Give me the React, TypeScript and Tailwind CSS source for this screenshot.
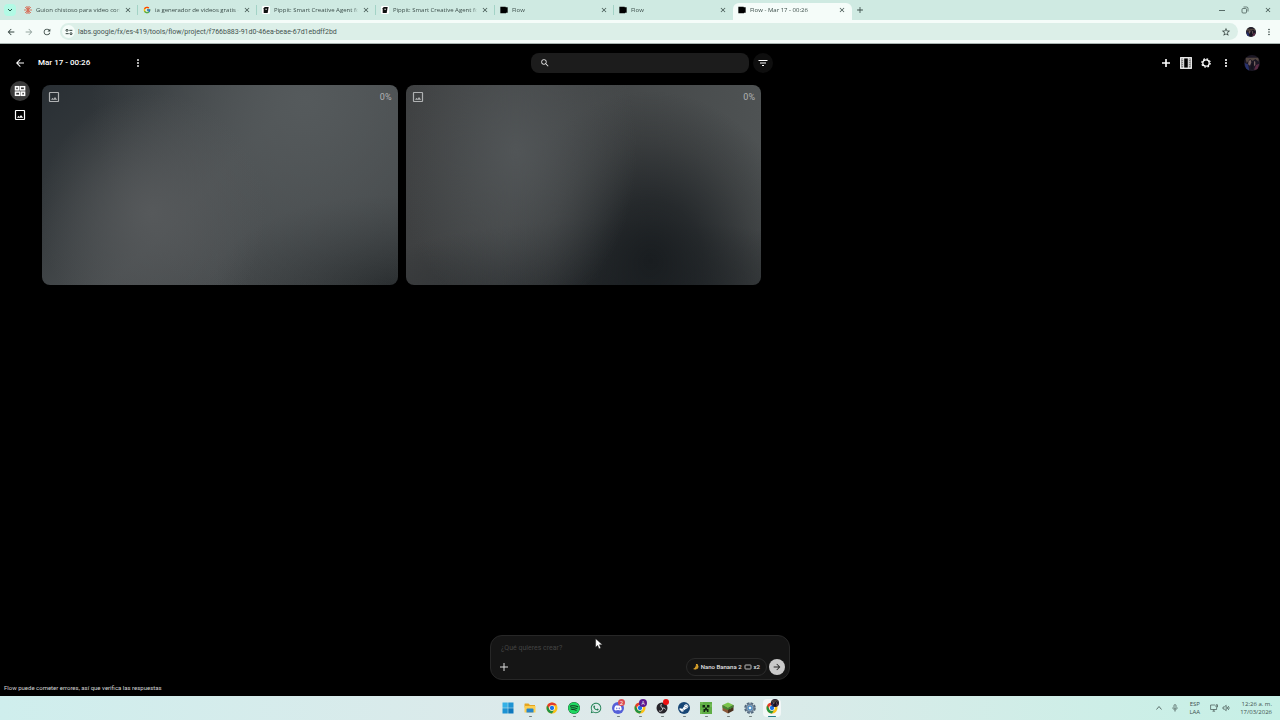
import type { ReactNode } from "react";
import clsx from "clsx";
import { FaDiscord, FaSpotify, FaSteamSymbol, FaWhatsapp } from "react-icons/fa";
import { FcGoogle } from "react-icons/fc";
import {
  MdAdd,
  MdArrowBack,
  MdArrowForward,
  MdClose,
  MdFilterList,
  MdMoreVert,
  MdRefresh,
  MdSearch,
  MdStarBorder
} from "react-icons/md";

interface IconProps {
  className?: string;
}

const ChromeIcon = ({ className }: IconProps) => (
  <svg viewBox="0 0 24 24" className={className}>
    <circle cx="12" cy="12" r="11" fill="#fbc116" />
    <path
      d="M2.5 6.5 7.2 14.8A5.6 5.6 0 0 0 16.8 14.8L12 23A11 11 0 0 1 2.5 6.5Z"
      fill="#229342"
    />
    <path d="M2.5 6.5A11 11 0 0 1 21.5 6.5H12A5.6 5.6 0 0 0 7.2 14.8Z" fill="#e33b2e" />
    <circle cx="12" cy="12" r="5.6" fill="#fff" />
    <circle cx="12" cy="12" r="4.3" fill="#1a73e8" />
  </svg>
);

const WindowsIcon = ({ className }: IconProps) => (
  <svg viewBox="0 0 24 24" className={className}>
    <path d="M1 1h10.5v10.5H1Z" fill="#35b1e6" />
    <path d="M12.5 1H23v10.5H12.5ZM1 12.5h10.5V23H1Z" fill="#1c93d3" />
    <path d="M12.5 12.5H23V23H12.5Z" fill="#0c78bd" />
  </svg>
);

const ImageIcon = ({ className }: IconProps) => (
  <svg viewBox="0 0 24 24" fill="none" className={className}>
    <rect x="3" y="3" width="18" height="18" rx="1" stroke="currentColor" strokeWidth="2.4" />
    <path d="m6 17.5 3-4 2 2.6 3-4 4.4 5.4Z" fill="currentColor" />
  </svg>
);

const GridIcon = ({ className }: IconProps) => (
  <svg
    viewBox="0 0 24 24"
    fill="none"
    stroke="currentColor"
    strokeWidth="3"
    className={className}
  >
    <rect x="3" y="3.4" width="6" height="6.4" />
    <rect x="12.6" y="3.4" width="8.6" height="6.4" />
    <rect x="3" y="14.2" width="8.6" height="6.4" />
    <rect x="15.2" y="14.2" width="6" height="6.4" />
  </svg>
);

const FilmIcon = ({ className }: IconProps) => (
  <svg viewBox="0 0 24 24" fill="none" stroke="currentColor" className={className}>
    <rect x="1.5" y="1.5" width="21" height="21" strokeWidth="2.6" />
    <path d="M7.4 2v20M16.6 2v20" strokeWidth="2" />
    <path d="M4.6 3v18M19.4 3v18" strokeWidth="3.4" strokeDasharray="2.4 1.6" />
  </svg>
);

const GearIcon = ({ className }: IconProps) => (
  <svg viewBox="0 0 24 24" fill="none" stroke="currentColor" className={className}>
    <circle cx="12" cy="12" r="6.4" strokeWidth="2.6" />
    <circle cx="12" cy="12" r="8.4" strokeWidth="2.4" strokeDasharray="3.4 3.2" />
  </svg>
);

const PlusIcon = ({ className }: IconProps) => (
  <svg viewBox="0 0 12 12" stroke="currentColor" strokeWidth="1.6" className={className}>
    <path d="M6 2v8M2 6h8" />
  </svg>
);

const TuneIcon = ({ className }: IconProps) => (
  <svg
    viewBox="0 0 24 24"
    fill="none"
    stroke="currentColor"
    strokeWidth="3"
    className={className}
  >
    <circle cx="6" cy="7" r="3" />
    <path d="M13 7h9M2 17h9" />
    <circle cx="18" cy="17" r="3" />
  </svg>
);

const ClaudeIcon = ({ className }: IconProps) => (
  <svg
    viewBox="0 0 24 24"
    stroke="#d6705a"
    strokeWidth="2.8"
    strokeLinecap="round"
    className={className}
  >
    <path d="M12 1v22M1 12h22M4 4l16 16M20 4 4 20M8 2l8 20M16 2 8 22" />
  </svg>
);

const PippitIcon = ({ className }: IconProps) => (
  <svg viewBox="0 0 24 24" className={className}>
    <rect width="24" height="24" rx="4" fill="#fff" />
    <path d="M8 3h12l-3 18H5V7Z" fill="#111" />
    <path d="M10 8h5v3h-5Z" fill="#ddd" />
  </svg>
);

const FlowIcon = ({ className }: IconProps) => (
  <svg viewBox="0 0 24 24" className={className}>
    <path d="M1 2h16v2h6v16h-5v2H1Z" fill="#000" />
  </svg>
);

const Avatar = ({ className }: IconProps) => (
  <svg viewBox="0 0 24 24" className={clsx("rounded-full", className)}>
    <rect width="24" height="24" fill="#1b1724" />
    <path d="M2 4h20v6l-5-4-4 3-4-3-5 6Z" fill="#51443f" />
    <path d="m7 9 3-2 1 4-2 5-3-2ZM15 9l2 1v5l-2 2Z" fill="#74605f" />
    <path d="M1 12l5 2 2 10H3Z" fill="#27316b" />
    <path d="m12 12 2 2-1 8-3-2Z" fill="#15121d" />
    <path d="m18 15 5-2-3 9h-5Z" fill="#5b2c46" />
  </svg>
);

const FolderIcon = ({ className }: IconProps) => (
  <svg viewBox="0 0 24 24" className={className}>
    <path d="M1 4a1 1 0 0 1 1-1h7l3 3h10v5H1Z" fill="#e5a520" />
    <path d="M1 8h22v13H1Z" fill="#fccf50" />
    <path d="M5 15a2 2 0 0 1 2-2h10a2 2 0 0 1 2 2v6H5Z" fill="#2685c9" />
  </svg>
);

const ObsIcon = ({ className }: IconProps) => (
  <svg viewBox="0 0 24 24" className={className}>
    <circle cx="12" cy="12" r="11" fill="#26242a" />
    <g fill="none" stroke="#d5d5d7" strokeWidth="1.8">
      <path d="M11 4a5 5 0 0 0 2 8M19 15a5 5 0 0 0-6-3M6 18a5 5 0 0 0 7-6" />
    </g>
  </svg>
);

const CreeperIcon = ({ className }: IconProps) => (
  <svg viewBox="0 0 24 24" className={className}>
    <rect width="24" height="24" fill="#5fae45" />
    <path d="M0 0h6v4H0ZM18 4h6v6h-6ZM0 16h4v8H0Z" fill="#6fb955" />
    <path d="M5 6h5v5H5ZM14 6h5v5h-5ZM10 11h4v3h3v6h-3v-3h-4v3H7v-6h3Z" fill="#132612" />
  </svg>
);

const GrassBlockIcon = ({ className }: IconProps) => (
  <svg viewBox="0 0 24 24" className={className}>
    <path d="m12 1 11 5-11 6L1 6Z" fill="#79c54b" />
    <path d="m1 6 11 6v11L1 17Z" fill="#8a5939" />
    <path d="m23 6-11 6v11l11-6Z" fill="#49301f" />
    <path d="m1 6 11 6v4l-3-2v2l-4-4v2L1 11ZM23 6l-11 6v4l4-3v2l4-4v1l3-2Z" fill="#438831" />
  </svg>
);

const SettingsIcon = ({ className }: IconProps) => (
  <svg viewBox="0 0 24 24" fill="none" className={className}>
    <circle cx="12" cy="12" r="9.6" stroke="#52677a" strokeWidth="4" strokeDasharray="5.2 2.34" />
    <circle cx="12" cy="12" r="7.4" fill="#9bb3c6" stroke="#6b8196" strokeWidth="3" />
    <circle cx="12" cy="12" r="4" fill="#edf6fb" stroke="#2679bd" strokeWidth="2" />
  </svg>
);

interface Tab {
  title: string;
  icon: ReactNode;
  active?: boolean;
}

const tabs: Tab[] = [
  { title: "Guion chistoso para video cort", icon: <ClaudeIcon className="size-2" /> },
  { title: "ia generador de videos gratis -", icon: <FcGoogle className="size-2" /> },
  { title: "Pippit: Smart Creative Agent fo", icon: <PippitIcon className="size-2" /> },
  { title: "Pippit: Smart Creative Agent fo", icon: <PippitIcon className="size-2" /> },
  { title: "Flow", icon: <FlowIcon className="size-2" /> },
  { title: "Flow", icon: <FlowIcon className="size-2" /> },
  { title: "Flow - Mar 17 - 00:26", icon: <FlowIcon className="size-2" />, active: true }
];

const TabStrip = () => (
  <div className="flex h-5 items-center bg-[#cfeae2] text-[#3b4d49]">
    <button
      aria-label="Buscar pestañas"
      className="ml-1 flex size-3 shrink-0 items-center justify-center rounded-sm bg-[#b2fae5]"
    >
      <svg viewBox="0 0 8 8" className="size-2" fill="none" stroke="#24564a">
        <path d="m2 3 2 2 2-2" />
      </svg>
    </button>
    <div className="flex min-w-0 self-end pl-[3px]">
      {tabs.map((tab, index) => (
        <div
          key={index}
          className={clsx(
            "flex h-[17px] w-[119px] min-w-0 items-center",
            tab.active && "rounded-t-md bg-[#f5fcf9]"
          )}
        >
          <div
            className={clsx(
              "mb-[3px] flex h-2.5 min-w-0 flex-1 items-center gap-1 border-r pr-[5px] pl-[5px]",
              // no divider beside the active tab
              tab.active || tabs[index + 1]?.active
                ? "border-transparent"
                : "border-[#a3d3c6]"
            )}
          >
            {tab.icon}
            <span className="min-w-0 flex-1 mask-r-from-95% text-[6px] leading-2 whitespace-nowrap">
              {tab.title}
            </span>
            <button aria-label="Cerrar pestaña">
              <MdClose className="size-2" />
            </button>
          </div>
        </div>
      ))}
    </div>
    <button aria-label="Nueva pestaña" className="ml-[3px]">
      <MdAdd className="size-2.5" />
    </button>
    <div className="mr-2 ml-auto flex items-center gap-[15px]">
      <button aria-label="Minimizar">
        <svg viewBox="0 0 8 8" className="size-2" stroke="#3b4d49" strokeWidth="0.8">
          <path d="M1 4.5h6" />
        </svg>
      </button>
      <button aria-label="Restaurar">
        <svg viewBox="0 0 8 8" className="size-2" fill="none" stroke="#3b4d49" strokeWidth="0.7">
          <rect x="1" y="2.5" width="4.5" height="4.5" rx="1" />
          <path d="M2.5 1h3A1.5 1.5 0 0 1 7 2.5v3" />
        </svg>
      </button>
      <button aria-label="Cerrar">
        <MdClose className="size-2" />
      </button>
    </div>
  </div>
);

const AddressBar = () => (
  <div className="flex h-6 items-center border-b border-[#a9b5b1] bg-[#f5fcf9] text-[#33423e]">
    <div className="flex w-[60px] items-center gap-2 pl-1.5">
      <button aria-label="Atrás">
        <MdArrowBack className="size-2.5" />
      </button>
      <button aria-label="Adelante" className="text-[#96a5a0]">
        <MdArrowForward className="size-2.5" />
      </button>
      <button aria-label="Recargar">
        <MdRefresh className="size-2.5" />
      </button>
    </div>
    <div className="flex h-[17px] flex-1 items-center gap-[3px] rounded-full bg-[#dcefe8] pr-[7px] pl-0.5">
      <button
        aria-label="Información del sitio"
        className="flex size-[13px] items-center justify-center rounded-full bg-[#f5fcf9]"
      >
        <TuneIcon className="size-2" />
      </button>
      <input
        aria-label="Dirección"
        className="min-w-0 flex-1 bg-transparent font-[Roboto,sans-serif] text-[7px] leading-3 text-[#44534f] outline-none"
        defaultValue="labs.google/fx/es-419/tools/flow/project/f766b883-91d0-46ea-beae-67d1ebdff2bd"
      />
      <button aria-label="Agregar a favoritos">
        <MdStarBorder className="size-2.5" />
      </button>
    </div>
    <div className="flex items-center gap-2 pr-1.5 pl-2">
      <button aria-label="Perfil">
        <Avatar className="size-2.5" />
      </button>
      <button aria-label="Menú de Chrome">
        <MdMoreVert className="size-2.5" />
      </button>
    </div>
  </div>
);

const Header = () => (
  <header className="grid h-9 grid-cols-[1fr_218px_1fr] items-center">
    <div className="flex items-center pl-3.5">
      <button aria-label="Volver">
        <MdArrowBack className="size-3" />
      </button>
      <h1 className="w-[94px] pl-3 text-[8px] leading-3 font-medium whitespace-nowrap">
        Mar 17 - 00:26
      </h1>
      <button aria-label="Opciones del proyecto" className="ml-3 text-neutral-300">
        <MdMoreVert className="size-3" />
      </button>
    </div>
    <label className="flex h-5 items-center gap-2 rounded-lg bg-[#1c1c1c] px-[9px]">
      <MdSearch className="size-2.5 text-neutral-200" />
      <input aria-label="Buscar" className="min-w-0 flex-1 bg-transparent text-[8px] outline-none" />
    </label>
    <div className="flex items-center pr-5">
      <button
        aria-label="Filtrar"
        className="ml-1 flex size-5 items-center justify-center rounded-full bg-[#0e0e0e]"
      >
        <MdFilterList className="size-3" />
      </button>
      <div className="ml-auto flex items-center gap-2">
        <button aria-label="Agregar">
          <PlusIcon className="size-3" />
        </button>
        <button aria-label="Escenas">
          <FilmIcon className="size-3" />
        </button>
        <button aria-label="Configuración">
          <GearIcon className="size-3" />
        </button>
        <button aria-label="Más">
          <MdMoreVert className="size-3" />
        </button>
        <button aria-label="Cuenta" className="ml-1">
          <Avatar className="size-4" />
        </button>
      </div>
    </div>
  </header>
);

const cards = [
  "bg-[radial-gradient(ellipse_32%_60%_at_31%_64%,#56595b_0%,transparent_100%),radial-gradient(ellipse_60%_110%_at_74%_8%,#555a5c_0%,transparent_100%),radial-gradient(ellipse_50%_45%_at_98%_100%,#282c2e_0%,transparent_100%),linear-gradient(135deg,#292f34_0%,#34393c_22%,#4a4e50_48%,#404446_100%)]",
  "bg-[radial-gradient(ellipse_34%_85%_at_31%_33%,#515557_0%,transparent_100%),radial-gradient(ellipse_42%_85%_at_69%_88%,#191d20_0%,#1d2124cc_35%,#26292b66_70%,transparent_100%),radial-gradient(ellipse_75%_35%_at_60%_102%,#222629_0%,transparent_100%),linear-gradient(90deg,#3e4041_0%,#424546_50%,#4e5253_100%)]"
];

const Gallery = () => (
  <div className="grid w-[719px] max-w-full grid-cols-2 gap-2 self-start pt-1">
    {cards.map((background, index) => (
      <div
        key={index}
        className={clsx(
          "flex aspect-video items-start justify-between rounded-lg px-1.5 pt-1.5 text-[#b0b2b3]",
          background
        )}
      >
        <ImageIcon className="size-3" />
        <span className="text-[9px] leading-3">0%</span>
      </div>
    ))}
  </div>
);

const PromptBox = () => (
  <form
    className="relative mx-auto flex h-[45px] w-[300px] flex-col justify-between rounded-xl border border-[#272727] bg-[#151515] pt-1.5 pr-1 pb-[3px] pl-2"
    onSubmit={(event) => event.preventDefault()}
  >
    <input
      aria-label="Descripción"
      placeholder="¿Qué quieres crear?"
      className="ml-0.5 h-3 bg-transparent text-[7px] leading-3 outline-none placeholder:text-[#444]"
    />
    <div className="flex items-center">
      <button type="button" aria-label="Adjuntar">
        <svg viewBox="0 0 10 10" className="size-2.5" stroke="#ddd">
          <path d="M5 1v8M1 5h8" />
        </svg>
      </button>
      <button
        type="button"
        className="mr-0.5 ml-auto flex h-[18px] items-center gap-0.5 rounded-full border border-[#2b2b2b] px-1.5 text-[6px] leading-2 font-medium text-neutral-200"
      >
        <svg viewBox="0 0 12 12" className="size-1.5">
          <path d="M6 0h3l2 5c0 4-3 6-7 6L0 10c4-1 6-5 6-10Z" fill="#e3a92c" />
          <path d="m7 2 1 5c0 2-2 3-4 4" fill="none" stroke="#8d681f" />
        </svg>
        <span>Nano Banana 2</span>
        <svg viewBox="0 0 8 8" className="size-2" fill="none" stroke="currentColor" strokeWidth="0.8">
          <rect x="1" y="2" width="6" height="4" rx="0.6" />
        </svg>
        <span>x2</span>
      </button>
      <button
        aria-label="Crear"
        className="flex size-4 items-center justify-center rounded-full bg-[#c9c9c9] text-[#222]"
      >
        <MdArrowForward className="size-2.5" />
      </button>
    </div>
    <svg viewBox="0 0 12 18" className="absolute top-0.5 left-[104px] h-3 w-2">
      <path d="M1 1v13l3-3 2 5 2.5-1-2-5H11Z" fill="#fff" stroke="#222" strokeWidth="0.6" />
    </svg>
  </form>
);

const Workspace = () => (
  <main className="flex flex-1 flex-col bg-black pt-px font-[Roboto,sans-serif] text-white">
    <Header />
    <div className="flex flex-1 pb-4">
      <nav className="flex w-[42px] flex-col items-start gap-2 pl-2.5">
        <button
          aria-label="Todo"
          className="flex size-5 items-center justify-center rounded-full bg-[#3a3a3a]"
        >
          <GridIcon className="size-3" />
        </button>
        <button aria-label="Imágenes" className="ml-1">
          <ImageIcon className="size-3" />
        </button>
      </nav>
      <Gallery />
    </div>
    <PromptBox />
    <p className="px-1 py-0.5 text-[6px] leading-3 text-neutral-300">
      Flow puede cometer errores, así que verifica las respuestas
    </p>
  </main>
);

interface TaskbarApp {
  name: string;
  icon: ReactNode;
  badge?: ReactNode;
  running?: boolean;
  active?: boolean;
}

const apps: TaskbarApp[] = [
  { name: "Inicio", icon: <WindowsIcon className="size-3" /> },
  { name: "Explorador de archivos", icon: <FolderIcon className="size-3" />, running: true },
  { name: "Google Chrome", icon: <ChromeIcon className="size-3" /> },
  {
    name: "Spotify",
    icon: <FaSpotify className="size-3 rounded-full bg-[#123a20] text-[#1ed760]" />,
    running: true
  },
  { name: "WhatsApp", icon: <FaWhatsapp className="size-3 text-[#1f8052]" /> },
  {
    name: "Discord",
    icon: (
      <span className="flex size-3 items-center justify-center rounded-full bg-[#5560d8]">
        <FaDiscord className="size-2 text-white" />
      </span>
    ),
    badge: (
      <span className="flex size-[7px] items-center justify-center rounded-full bg-[#dc4c53] text-[6px] leading-none text-white">
        2
      </span>
    ),
    running: true
  },
  {
    name: "Chrome, perfil A",
    icon: <ChromeIcon className="size-3" />,
    badge: (
      <span className="flex size-2 items-center justify-center rounded-full bg-[#5b1a91] text-[5px] leading-none text-white">
        A
      </span>
    ),
    running: true
  },
  {
    name: "OBS Studio",
    icon: <ObsIcon className="size-3" />,
    badge: <span className="block size-1.5 rounded-full bg-[#ee1111]" />,
    running: true
  },
  {
    name: "Steam",
    icon: (
      <span className="flex size-3 items-center justify-center rounded-full bg-[#174675]">
        <FaSteamSymbol className="size-2.5 text-white" />
      </span>
    ),
    running: true
  },
  { name: "Minecraft Launcher", icon: <CreeperIcon className="size-3" />, running: true },
  { name: "Minecraft", icon: <GrassBlockIcon className="size-3" />, running: true },
  { name: "Configuración de Windows", icon: <SettingsIcon className="size-3" />, running: true },
  {
    name: "Chrome, Flow",
    icon: <ChromeIcon className="size-3" />,
    badge: <Avatar className="size-2" />,
    running: true,
    active: true
  }
];

const Taskbar = () => (
  <footer className="grid h-6 grid-cols-[1fr_auto_1fr] items-center bg-linear-to-r from-[#cfeeed] via-[#dfe9ea] to-[#c6f0e6] text-[#40504e]">
    <div className="col-start-2 flex">
      {apps.map((app) => (
        <button
          key={app.name}
          aria-label={app.name}
          className="flex h-6 w-[22px] items-center justify-center"
        >
          <span
            className={clsx(
              "relative flex size-[18px] items-center justify-center rounded-sm",
              app.active && "bg-[#f2f7f7]"
            )}
          >
            {app.icon}
            {app.badge && <span className="absolute top-0 right-0.5">{app.badge}</span>}
            {app.running && (
              <span
                className={clsx(
                  "absolute bottom-0 h-px rounded-full",
                  app.active ? "w-2 bg-[#257d86]" : "w-[3px] bg-[#75807f]"
                )}
              />
            )}
          </span>
        </button>
      ))}
    </div>
    <div className="flex items-center justify-end gap-2.5 pr-2 text-right text-[6px] leading-2">
      <div className="flex gap-2">
        <svg viewBox="0 0 8 8" className="size-2" fill="none" stroke="currentColor" strokeWidth="0.8">
          <path d="m1.5 5.5 2.5-3 2.5 3" />
        </svg>
        <svg viewBox="0 0 8 8" className="size-2" fill="none" stroke="currentColor" strokeWidth="0.7">
          <rect x="3" y="0.6" width="2" height="4" rx="1" />
          <path d="M1.8 3.5c0 3 4.4 3 4.4 0M4 6v1.6" />
        </svg>
      </div>
      <div className="text-center">
        <p>ESP</p>
        <p>LAA</p>
      </div>
      <div className="flex gap-1">
        <svg viewBox="0 0 8 8" className="size-2" fill="none" stroke="currentColor" strokeWidth="0.7">
          <path d="M5 1H.6v4.5h6V3.5M2.5 7.2h2.6M3.8 5.5v1.6M6 .8h1.5V3H6Z" />
        </svg>
        <svg viewBox="0 0 8 8" className="size-2" fill="none" stroke="currentColor" strokeWidth="0.7">
          <path d="M1 3h1.2l2-1.7v5.4l-2-1.7H1ZM5.2 3q1 1 0 2M6.2 2q2 2 0 4" />
        </svg>
      </div>
      <div>
        <p>12:26 a. m.</p>
        <p>17/03/2026</p>
      </div>
    </div>
  </footer>
);

export default function App() {
  return (
    <div className="flex min-h-screen flex-col font-['Open_Sans',sans-serif]">
      <TabStrip />
      <AddressBar />
      <Workspace />
      <Taskbar />
    </div>
  );
}
